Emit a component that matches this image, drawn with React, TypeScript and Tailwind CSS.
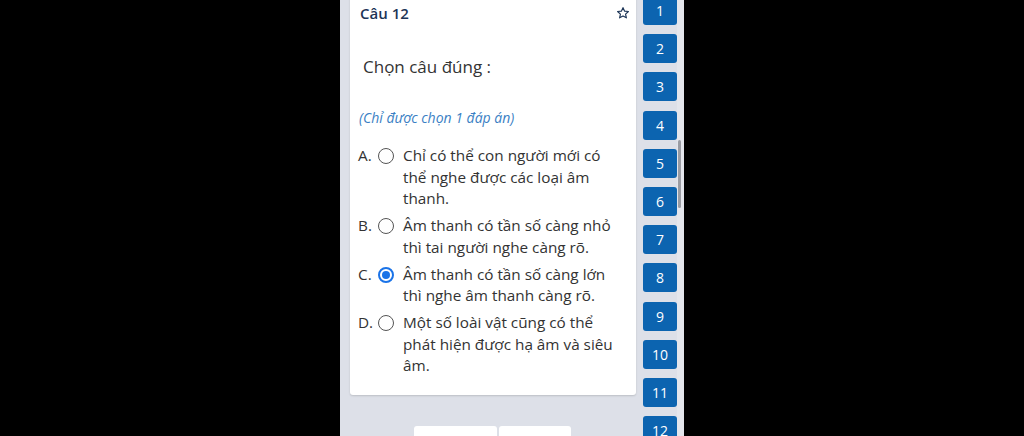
const options = [
  { key: "A", text: "Chỉ có thể con người mới có thể nghe được các loại âm thanh." },
  { key: "B", text: "Âm thanh có tần số càng nhỏ thì tai người nghe càng rõ." },
  { key: "C", text: "Âm thanh có tần số càng lớn thì nghe âm thanh càng rõ." },
  { key: "D", text: "Một số loài vật cũng có thể phát hiện được hạ âm và siêu âm." },
];

const selected = "C";

function StarIcon() {
  return (
    <svg width="14" height="14" viewBox="0 0 24 24" fill="none" stroke="#1d3557" strokeWidth="2" strokeLinejoin="round">
      <path d="M12 2.8l2.8 6 6.5.7-4.9 4.4 1.4 6.4L12 17l-5.8 3.3 1.4-6.4-4.9-4.4 6.5-.7z" />
    </svg>
  );
}

function Radio({ checked }: { checked: boolean }) {
  return checked ? (
    <span className="mt-[3px] flex h-4 w-4 shrink-0 items-center justify-center rounded-full border-2 border-[#1a73e8]">
      <span className="h-2 w-2 rounded-full bg-[#1a73e8]" />
    </span>
  ) : (
    <span className="mt-[3px] h-4 w-4 shrink-0 rounded-full border border-[#555]" />
  );
}

export default function App() {
  const numbers = Array.from({ length: 12 }, (_, i) => i + 1);

  return (
    <div
      className="flex h-[436px] w-[1024px] overflow-hidden bg-black"
      style={{ fontFamily: '"Open Sans", "Noto Sans", sans-serif' }}
    >
      <div className="w-[340px] shrink-0" />
      <div className="flex w-[344px] shrink-0 bg-[#dde0e8]">
        <div className="ml-[10px] w-[286px] shrink-0">
          <div className="-mt-[8px] rounded-[3px] bg-white pb-[18px] shadow-[0_1px_2px_rgba(0,0,0,0.15)]">
            <div className="flex items-center justify-between pl-[10px] pr-[6px] pt-[10px]">
              <span className="text-[15px] font-semibold text-[#1d3557]">Câu 12</span>
              <StarIcon />
            </div>
            <div className="pl-[13px] pt-[29px] text-[17px] text-[#333]">Chọn câu đúng :</div>
            <div className="pl-[9px] pt-[28px] text-[14px] italic text-[#3b7fc4]">(Chỉ được chọn 1 đáp án)</div>
            <div className="flex flex-col gap-[5.5px] pl-[8px] pr-[10px] pt-[17px]">
              {options.map((o) => (
                <div key={o.key} className="flex items-start text-[15.3px] leading-[21.5px] text-[#333]">
                  <span className="w-[20px] shrink-0">{o.key}.</span>
                  <Radio checked={o.key === selected} />
                  <span className="pl-[9px]">{o.text}</span>
                </div>
              ))}
            </div>
          </div>
          <div className="mt-[31px] flex pl-[64px]">
            <div className="h-[20px] w-[83px] rounded-t-[3px] bg-white" />
            <div className="ml-[2px] h-[20px] w-[72px] rounded-t-[3px] bg-white" />
          </div>
        </div>
        <div className="ml-[7px] -mt-[4px] flex w-[34px] shrink-0 flex-col gap-[9.2px]">
          {numbers.map((n) => (
            <div
              key={n}
              className="flex h-[29px] shrink-0 items-center justify-center rounded-[3px] bg-[#0c64b0] text-[14px] text-white"
            >
              {n}
            </div>
          ))}
        </div>
        <div className="relative w-[7px] shrink-0 bg-[#e4e6ec]">
          <div className="absolute left-[1px] top-[140px] h-[68px] w-[3px] rounded-full bg-[#9a9ca3]" />
        </div>
      </div>
      <div className="flex-1" />
    </div>
  );
}
